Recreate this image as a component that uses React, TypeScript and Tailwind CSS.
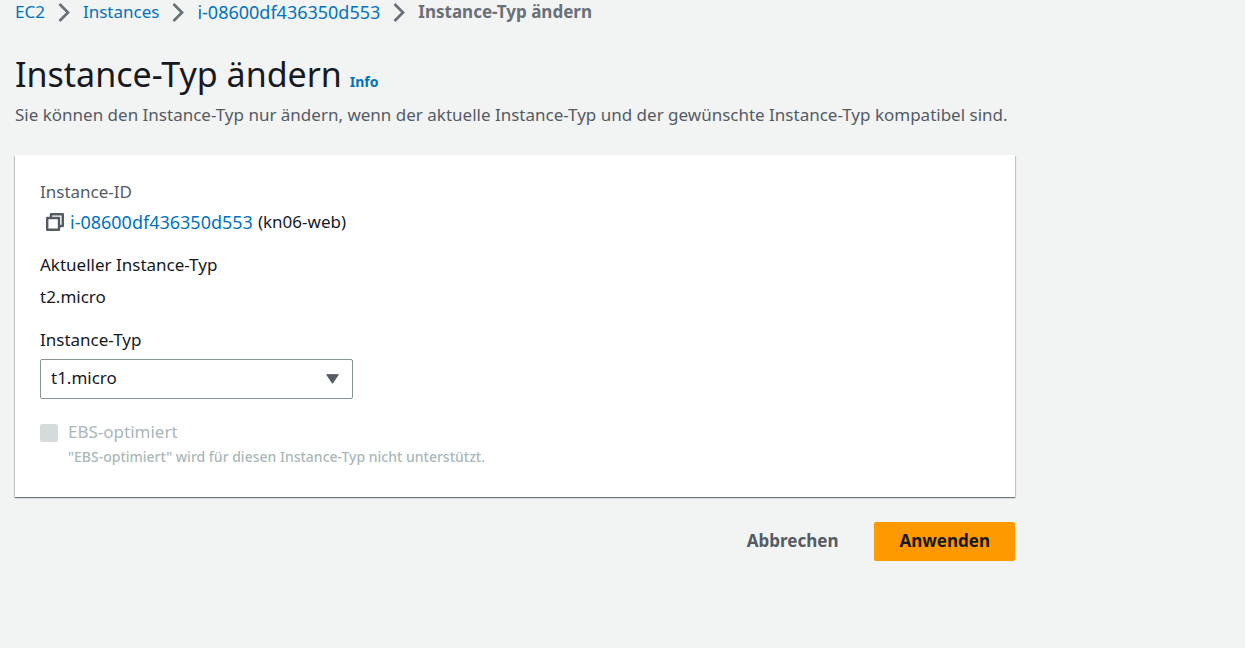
import { Fragment, useState } from "react";

const crumbs = ["EC2", "Instances"];
const instanceId = "i-08600df436350d553";

function Chevron() {
  return (
    <svg className="h-5 w-3 shrink-0" viewBox="0 0 12 20" fill="none" stroke="#687078" strokeWidth="2.7" aria-hidden="true">
      <path d="M1.5 2 10 10.5 1.5 19" />
    </svg>
  );
}

function CopyIcon() {
  return (
    <svg className="size-[18px]" viewBox="0 0 18 18" fill="none" stroke="#545b64" strokeWidth="2.4" strokeLinejoin="round" aria-hidden="true">
      <path d="M5 4.5V1.2h11.8V13H13.5" />
      <path d="M1.2 5h11.8v11.8H1.2z" />
    </svg>
  );
}

export default function App() {
  const [instanceType, setInstanceType] = useState("t1.micro");

  return (
    <div className="min-h-screen bg-[#f2f3f3] px-[15px] font-['Noto_Sans',sans-serif] text-[17px] leading-6 text-[#16191f]">
      <div className="max-w-[1000px]">
        <nav aria-label="Breadcrumb" className="flex items-center gap-[13px] whitespace-nowrap">
          {crumbs.map((label) => (
            <Fragment key={label}>
              <a href="#" className="text-[#0073bb]">{label}</a>
              <Chevron />
            </Fragment>
          ))}
          <a href="#" className="text-lg leading-6 text-[#0073bb]">{instanceId}</a>
          <Chevron />
          <span aria-current="page" className="font-bold text-[#687078]">Instance-Typ ändern</span>
        </nav>

        <header className="pt-[26px]">
          <div className="flex items-baseline gap-2">
            <h1 className="text-[34px] leading-[48px]">Instance-Typ ändern</h1>
            <a href="#" className="text-sm font-bold text-[#0073bb]">Info</a>
          </div>
          <p className="mt-[5px] text-[#545b64]">
            Sie können den Instance-Typ nur ändern, wenn der aktuelle Instance-Typ und der gewünschte Instance-Typ kompatibel sind.
          </p>
        </header>

        <form onSubmit={(e) => e.preventDefault()}>
          <section className="mt-7 bg-white px-[25px] pt-[25px] pb-[30px] shadow-[0_1px_1px_0_rgba(0,28,36,0.4),1px_1px_1px_0_rgba(0,28,36,0.15),-1px_1px_1px_0_rgba(0,28,36,0.15)]">
            <div className="text-[#545b64]">Instance-ID</div>
            <div className="mt-[6px] flex items-center pl-[6px]">
              <button type="button" aria-label="Instance-ID kopieren" className="mr-[6px]">
                <CopyIcon />
              </button>
              <a href="#" className="mr-[5px] text-lg leading-6 text-[#0073bb]">{instanceId}</a>
              <span>(kn06-web)</span>
            </div>

            <div className="mt-[19px]">Aktueller Instance-Typ</div>
            <div className="mt-2">t2.micro</div>

            <label htmlFor="instance-type" className="mt-[19px] block">Instance-Typ</label>
            <div className="mt-[7px] grid max-w-[313px] items-center">
              <select
                id="instance-type"
                value={instanceType}
                onChange={(e) => setInstanceType(e.target.value)}
                className="col-start-1 row-start-1 h-10 w-full appearance-none rounded-xs border border-[#879596] bg-white px-[10px] pb-[2px]"
              >
                <option>t1.micro</option>
                <option>t2.micro</option>
              </select>
              <svg className="pointer-events-none col-start-1 row-start-1 mr-[14px] h-[10px] w-[13px] justify-self-end" viewBox="0 0 13 10" fill="#545b64" stroke="#545b64" strokeLinejoin="round" aria-hidden="true">
                <path d="M.7.7h11.6L6.5 9.3z" />
              </svg>
            </div>

            <div className="mt-[21px] flex gap-[10px] text-[#aab7b8]">
              <input
                id="ebs"
                type="checkbox"
                disabled
                aria-describedby="ebs-help"
                className="mt-1 size-[18px] shrink-0 appearance-none rounded-xs bg-[#d5dbdb]"
              />
              <div>
                <label htmlFor="ebs" className="block">EBS-optimiert</label>
                <p id="ebs-help" className="mt-[3px] text-sm font-medium">"EBS-optimiert" wird für diesen Instance-Typ nicht unterstützt.</p>
              </div>
            </div>
          </section>

          <div className="mt-[25px] flex justify-end gap-[11px] font-bold">
            <button type="button" className="h-[39px] px-[25px] pb-[2px] text-[#545b64]">Abbrechen</button>
            <button type="submit" className="h-[39px] rounded-xs bg-[#ff9900] px-[25px] pb-[2px]">Anwenden</button>
          </div>
        </form>
      </div>
    </div>
  );
}
